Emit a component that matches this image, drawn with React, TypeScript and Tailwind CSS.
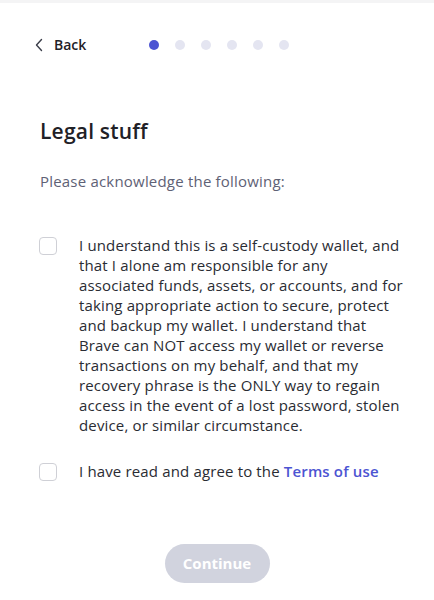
import React from "react";

const font = { fontFamily: '"Open Sans", "Liberation Sans", sans-serif' };

function Checkbox() {
  return (
    <span className="mt-[2px] block h-[18px] w-[18px] shrink-0 rounded-[4px] border border-[#cfd0d6] bg-white" />
  );
}

export default function App() {
  const steps = [0, 1, 2, 3, 4, 5];
  const lines = [
    "I understand this is a self-custody wallet, and",
    "that I alone am responsible for any",
    "associated funds, assets, or accounts, and for",
    "taking appropriate action to secure, protect",
    "and backup my wallet. I understand that",
    "Brave can NOT access my wallet or reverse",
    "transactions on my behalf, and that my",
    "recovery phrase is the ONLY way to regain",
    "access in the event of a lost password, stolen",
    "device, or similar circumstance.",
  ];
  return (
    <div className="flex h-[600px] w-[434px] flex-col bg-white" style={font}>
      <div className="h-[3px] bg-[#f4f4f5]" />
      <div className="flex items-center pl-[34px] pt-[31px]">
        <button className="flex items-center gap-[10px] text-[14px] font-semibold text-[#1f2127]">
          <svg width="10" height="14" viewBox="0 0 10 14" fill="none">
            <path d="M7.5 1.5L2.5 7l5 5.5" stroke="#3b3e4a" strokeWidth="1.4" strokeLinecap="round" strokeLinejoin="round" />
          </svg>
          <span>Back</span>
        </button>
        <div className="ml-[63px] flex items-center gap-[16px]">
          {steps.map((s) => (
            <span
              key={s}
              className={
                s === 0
                  ? "block h-[10px] w-[10px] rounded-full bg-[#4c54d2]"
                  : "block h-[10px] w-[10px] rounded-full bg-[#e4e5f1]"
              }
            />
          ))}
        </div>
      </div>

      <h1 className="mt-[62px] pl-[40px] text-[21px] font-semibold leading-[28px] tracking-[0.2px] text-[#1f2127]">
        Legal stuff
      </h1>
      <p className="mt-[26px] pl-[40px] text-[15px] leading-[20px] tracking-[0.2px] text-[#5e6175]">
        Please acknowledge the following:
      </p>

      <div className="mt-[44px] flex gap-[22px] pl-[39px]">
        <Checkbox />
        <p className="whitespace-nowrap text-[15px] leading-[20px] tracking-[0.15px] text-[#2a2c33]">
          {lines.map((l, i) => (
            <React.Fragment key={i}>
              {l}
              {i < lines.length - 1 && <br />}
            </React.Fragment>
          ))}
        </p>
      </div>

      <div className="mt-[26px] flex gap-[22px] pl-[39px]">
        <Checkbox />
        <p className="text-[15px] leading-[20px] tracking-[0.15px] text-[#2a2c33]">
          I have read and agree to the{" "}
          <a className="font-semibold text-[#4c54d2]">Terms of use</a>
        </p>
      </div>

      <div className="mt-[63px] flex justify-center">
        <button className="h-[39px] w-[105px] rounded-full bg-[#d1d3de] text-[15px] font-bold text-white">
          Continue
        </button>
      </div>
    </div>
  );
}
